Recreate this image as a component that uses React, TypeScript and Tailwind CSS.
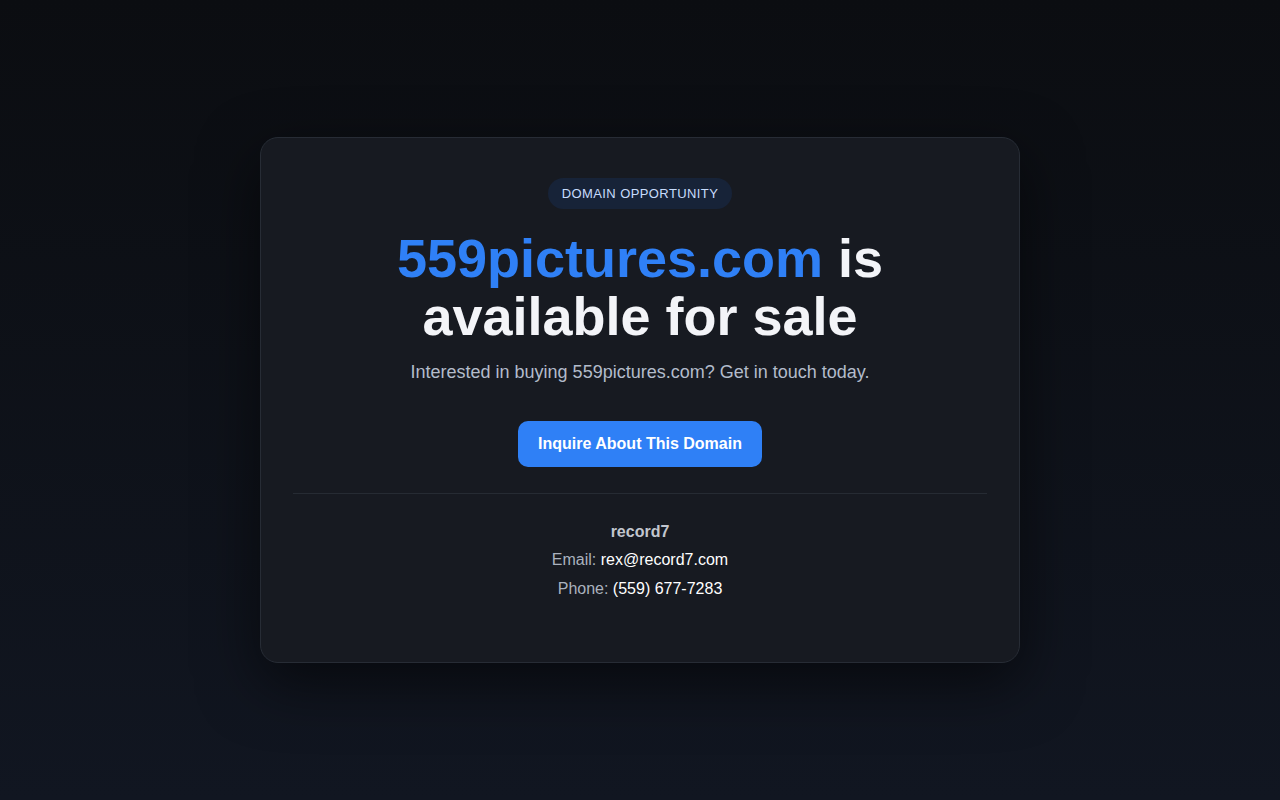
export default function App() {
  return (
    <div
      className="min-h-screen w-full flex items-center justify-center bg-gradient-to-b from-[#0b0d11] to-[#111621] px-4"
      style={{ fontFamily: '"Liberation Sans", Arial, sans-serif' }}
    >
      <div className="w-[760px] rounded-[18px] border border-[#272c35] bg-[#171a21] px-8 pt-10 pb-[61px] text-center shadow-[0_20px_60px_rgba(0,0,0,0.55)]">
        <span className="inline-block rounded-full bg-[#172338] px-[14px] py-[7px] text-[13px] leading-[17px] tracking-[0.4px] text-[#c7dcfd] uppercase">
          Domain Opportunity
        </span>
        <h1 className="mx-auto mt-[20px] max-w-[560px] text-[54px] font-bold leading-[58px] text-[#f3f4f8]">
          <span className="text-[#2f80f6]">559pictures.com</span> is available for sale
        </h1>
        <p className="mt-[14px] text-[18px] leading-[26px] text-[#b3bccb]">
          Interested in buying 559pictures.com? Get in touch today.
        </p>
        <button className="mt-[36px] h-[46px] rounded-[10px] bg-[#2f80f6] px-5 text-[16px] font-bold text-white">
          Inquire About This Domain
        </button>
        <div className="mt-[26px] border-t border-[#262b33] pt-[26px]">
          <p className="text-[16px] font-bold leading-[24px] text-[#c2c6ce]">record7</p>
          <p className="mt-[4px] text-[16px] leading-[24px] text-[#aab2be]">
            Email: <span className="text-white">rex@record7.com</span>
          </p>
          <p className="mt-[5px] text-[16px] leading-[24px] text-[#aab2be]">
            Phone: <span className="text-white">(559) 677-7283</span>
          </p>
        </div>
      </div>
    </div>
  )
}
